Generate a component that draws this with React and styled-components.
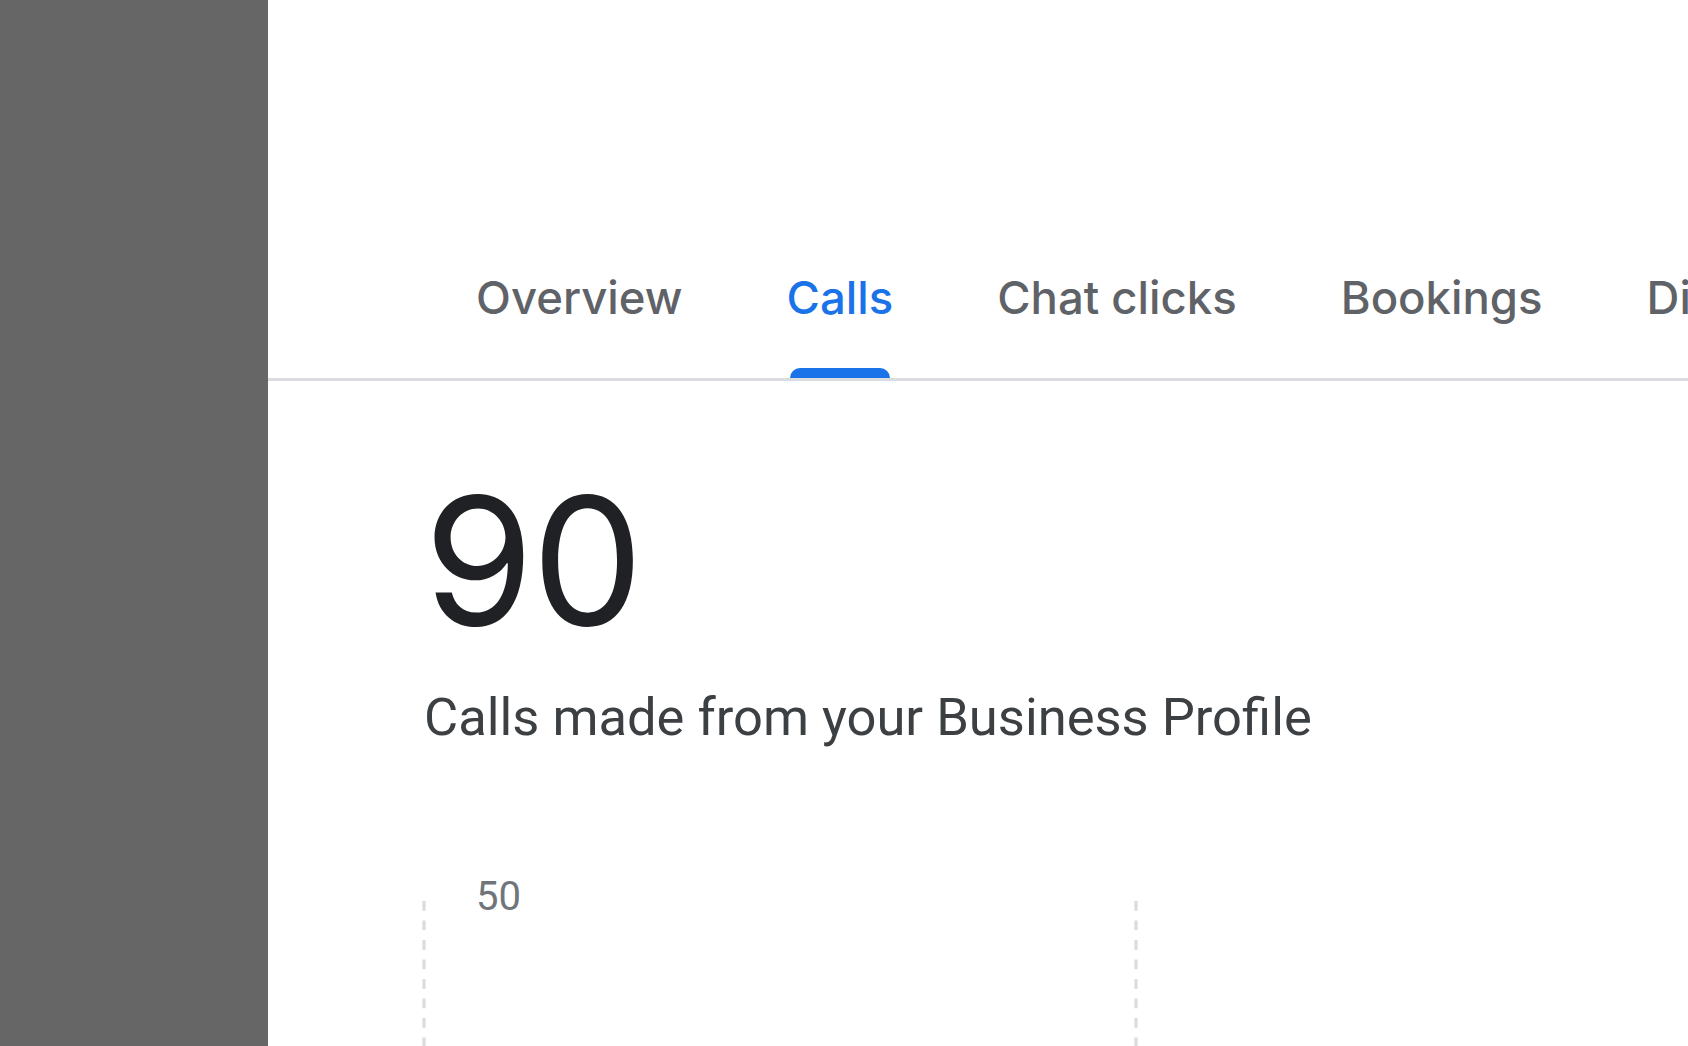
import React from "react";
import styled, { createGlobalStyle } from "styled-components";

const Global = createGlobalStyle`
  html, body { margin: 0; padding: 0; background: #ffffff; }
  body { font-family: Roboto, "Liberation Sans", Arial, sans-serif; }
  * { box-sizing: border-box; }
`;

const Page = styled.div`
  display: flex;
  width: 1688px;
  height: 1046px;
  overflow: hidden;
`;

const Sidebar = styled.aside`
  flex: 0 0 268px;
  background: #666666;
`;

const Main = styled.main`
  flex: 1;
  min-width: 0;
  display: flex;
  flex-direction: column;
  overflow: hidden;
`;

const TabBar = styled.nav`
  display: flex;
  padding: 275px 0 0 156px;
  border-bottom: 3px solid #dadce0;
  white-space: nowrap;
`;

const Tab = styled.div`
  position: relative;
  flex: 0 0 auto;
  padding: 0 52px 57px;
  font-family: Inter, "Open Sans", sans-serif;
  font-size: 45.5px;
  line-height: 46px;
  font-weight: 500;
  letter-spacing: 0;
  color: ${(p) => (p.$active ? "#1a73e8" : "#5f6368")};
`;

const Indicator = styled.span`
  position: absolute;
  left: 55px;
  right: 55px;
  bottom: 0;
  height: 10px;
  background: #1a73e8;
  border-radius: 10px 10px 0 0;
`;

const Content = styled.section`
  display: flex;
  flex-direction: column;
  padding-left: 156px;
`;

const Total = styled.div`
  margin-top: 92px;
  font-family: Inter, "Open Sans", sans-serif;
  font-size: 177px;
  line-height: 177px;
  font-weight: 400;
  color: #202124;
  letter-spacing: -2px;
`;

const Caption = styled.div`
  margin-top: 41px;
  font-family: Roboto, "Liberation Sans", sans-serif;
  font-size: 52.5px;
  line-height: 52px;
  color: #3c4043;
`;

const Chart = styled.div`
  position: relative;
  margin-top: 134px;
  margin-left: -2px;
  height: 200px;
`;

const AxisLabel = styled.span`
  position: absolute;
  left: 54px;
  top: 0;
  font-family: Roboto, "Liberation Sans", sans-serif;
  font-size: 40px;
  line-height: 40px;
  color: #70757a;
`;

const Grid = styled.svg`
  display: block;
  width: 1300px;
  height: 200px;
`;

export default function App() {
  const tabs = ["Overview", "Calls", "Chat clicks", "Bookings", "Directions"];
  return (
    <>
      <Global />
      <Page>
        <Sidebar />
        <Main>
          <TabBar>
            {tabs.map((t) => (
              <Tab key={t} $active={t === "Calls"}>
                {t}
                {t === "Calls" && <Indicator />}
              </Tab>
            ))}
          </TabBar>
          <Content>
            <Total>90</Total>
            <Caption>Calls made from your Business Profile</Caption>
            <Chart>
              <Grid viewBox="0 0 1300 200">
                {[2, 714].map((x) => (
                  <line
                    key={x}
                    x1={x}
                    x2={x}
                    y1={24}
                    y2={200}
                    stroke="#dadce0"
                    strokeWidth="3.25"
                    strokeDasharray="9.75 9.75"
                  />
                ))}
              </Grid>
              <AxisLabel>50</AxisLabel>
            </Chart>
          </Content>
        </Main>
      </Page>
    </>
  );
}
